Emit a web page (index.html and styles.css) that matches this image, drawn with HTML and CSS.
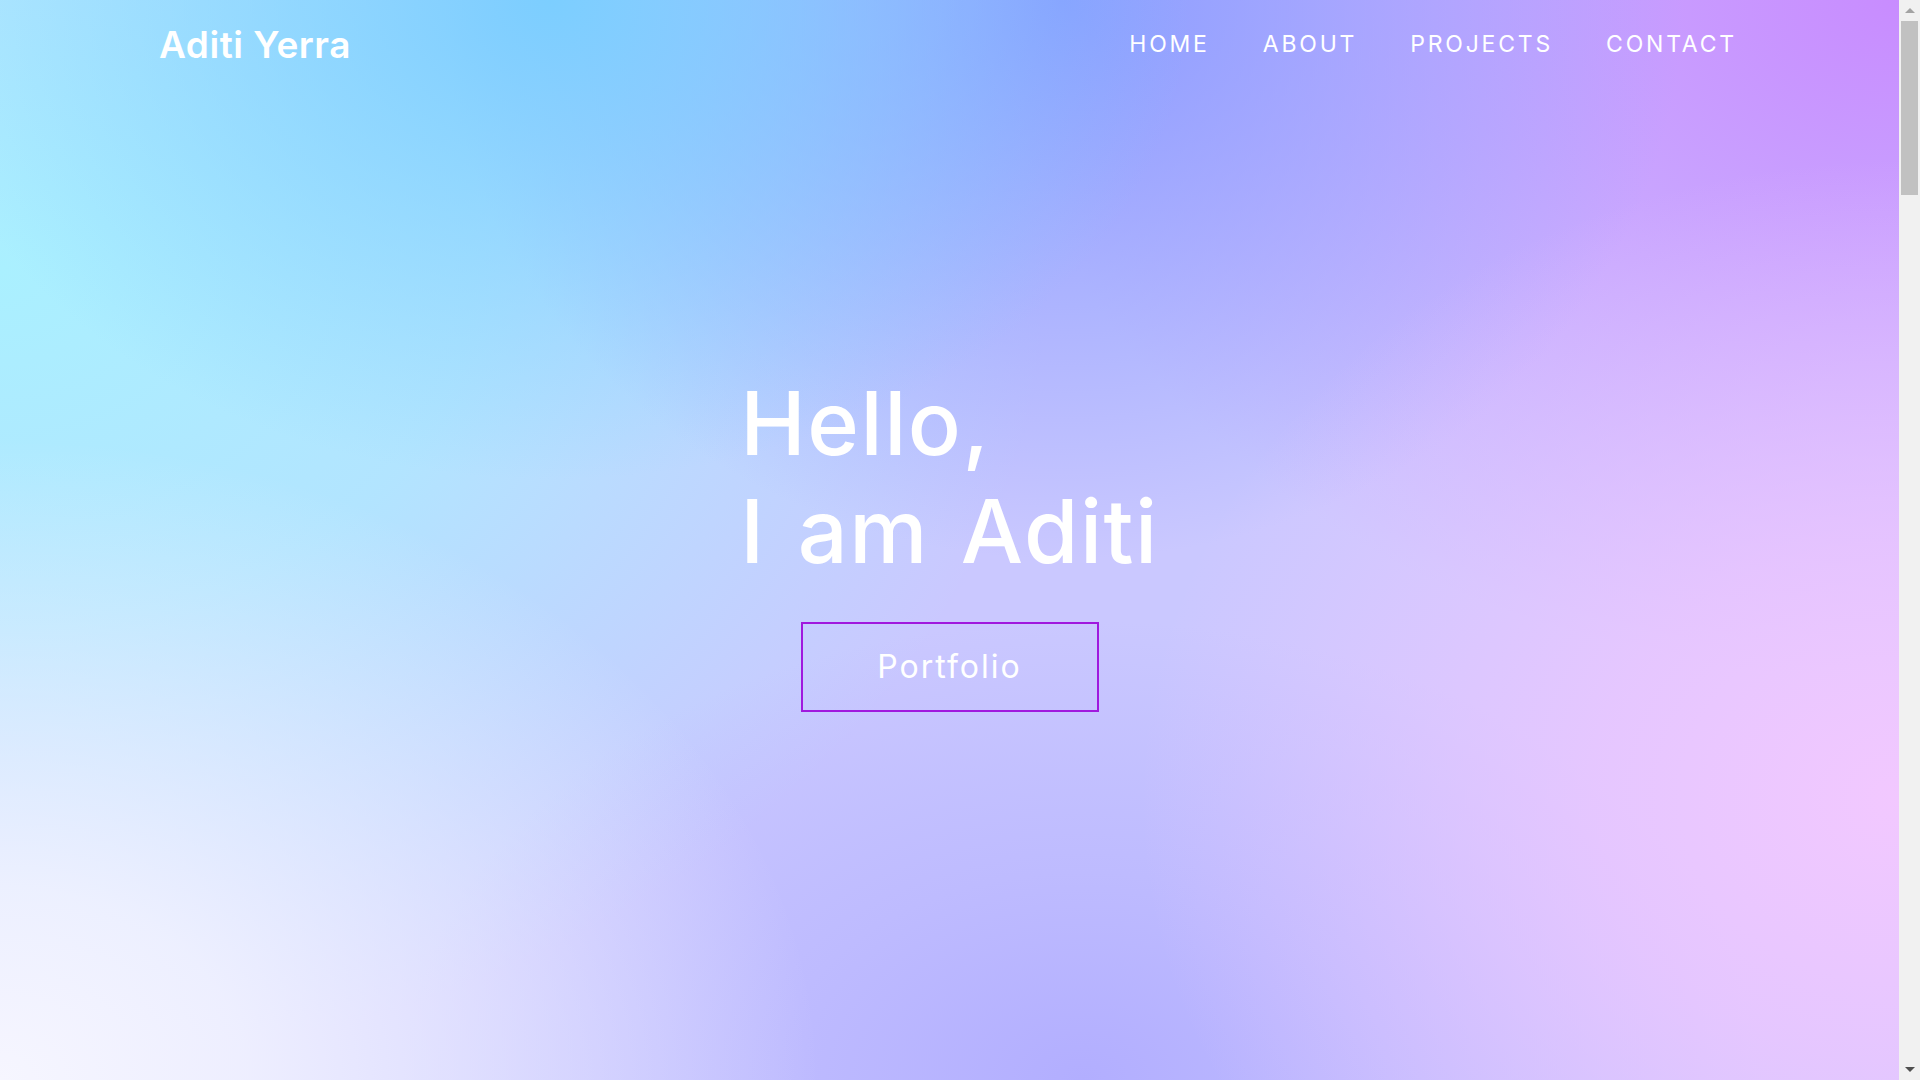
FILE: index.html
```html
<!DOCTYPE html>
<html lang="en">
<head>
<meta charset="utf-8">
<title>Aditi Yerra</title>
<link rel="stylesheet" href="styles.css">
</head>
<body>
<div class="page">
  <section class="hero" id="home">
    <header class="site-header">
      <a class="logo" href="#home">Aditi Yerra</a>
      <nav class="nav">
        <a href="#home">HOME</a>
        <a href="#about">ABOUT</a>
        <a href="#projects">PROJECTS</a>
        <a href="#contact">CONTACT</a>
      </nav>
    </header>
    <div class="hero-body">
      <div class="hero-content">
        <h1 class="hero-title">Hello,<br>I am Aditi</h1>
        <a class="btn-portfolio" href="#projects">Portfolio</a>
      </div>
    </div>
  </section>
  <section class="section" id="about"></section>
  <section class="section" id="projects"></section>
  <section class="section" id="contact"></section>
</div>
<div class="scrollbar" aria-hidden="true">
  <div class="sb-btn"><span class="sb-arrow-up"></span></div>
  <div class="sb-track"><div class="sb-thumb"></div></div>
  <div class="sb-btn"><span class="sb-arrow-down"></span></div>
</div>
</body>
</html>
```

FILE: styles.css
```css
* { box-sizing: border-box; }
html, body { margin: 0; padding: 0; height: 100%; }
body {
  display: flex;
  overflow: hidden;
  font-family: "Inter", "Liberation Sans", sans-serif;
  color: #fff;
  background: #f4f2ff;
}
a { color: inherit; text-decoration: none; }

.page {
  flex: 1;
  height: 100vh;
  overflow-y: auto;
  scrollbar-width: none;
}
.page::-webkit-scrollbar { display: none; }

/* classic scrollbar look */
.scrollbar {
  width: 21px;
  height: 100vh;
  display: flex;
  flex-direction: column;
  background: #f1f1f1;
}
.sb-btn {
  height: 21px;
  display: flex;
  align-items: center;
  justify-content: center;
}
.sb-arrow-up, .sb-arrow-down {
  width: 0;
  height: 0;
  border-left: 5px solid transparent;
  border-right: 5px solid transparent;
}
.sb-arrow-up { border-bottom: 5px solid #a3a3a3; }
.sb-arrow-down { border-top: 5px solid #505050; }
.sb-track {
  flex: 1;
  padding: 0 2px;
}
.sb-thumb {
  height: 174px;
  background: #c1c1c1;
}

.hero {
  height: 100vh;
  display: flex;
  flex-direction: column;
  background-color: #cac8ff;
  background-image:
    radial-gradient(ellipse 820px 640px at 0% 100%, rgba(246,246,255,1) 0%, rgba(244,245,255,0.85) 30%, rgba(240,244,255,0) 100%),
    radial-gradient(ellipse 760px 640px at 100% 74%, rgba(242,200,255,1) 0%, rgba(240,198,255,0.72) 40%, rgba(240,198,255,0) 100%),
    radial-gradient(ellipse 640px 480px at 29% 0%, rgba(124,206,255,1) 0%, rgba(124,206,255,0.6) 40%, rgba(124,206,255,0) 100%),
    radial-gradient(ellipse 620px 560px at 56% 0%, rgba(138,156,255,1) 0%, rgba(138,156,255,0.6) 40%, rgba(138,156,255,0) 100%),
    radial-gradient(ellipse 900px 680px at 100% 0%, rgba(200,140,255,1) 0%, rgba(200,140,255,0.6) 40%, rgba(200,140,255,0) 100%),
    radial-gradient(ellipse 680px 460px at 57% 100%, rgba(178,174,255,1) 0%, rgba(178,174,255,0.5) 45%, rgba(178,174,255,0) 100%),
    radial-gradient(ellipse 1050px 800px at 0% 25%, rgba(170,240,255,1) 0%, rgba(170,238,255,0.75) 45%, rgba(170,238,255,0) 100%);
}

.site-header {
  height: 88px;
  flex: none;
  display: flex;
  align-items: center;
  justify-content: space-between;
  padding: 0 162px 0 159px;
}
.logo {
  font-size: 37px;
  font-weight: 600;
  letter-spacing: 0.5px;
}
.nav {
  display: flex;
  gap: 53px;
}
.nav a {
  font-size: 23px;
  font-weight: 400;
  letter-spacing: 2.8px;
}

.hero-body {
  flex: 1;
  display: flex;
  align-items: center;
  justify-content: center;
  padding-bottom: 88px;
}
.hero-content {
  display: flex;
  flex-direction: column;
  align-items: center;
}
.hero-title {
  margin: 0;
  font-size: 88px;
  font-weight: 500;
  line-height: 108px;
  letter-spacing: 1.5px;
  word-spacing: 7px;
  text-align: left;
}
.btn-portfolio {
  margin-top: 37px;
  height: 90px;
  width: 298px;
  display: flex;
  align-items: center;
  justify-content: center;
  border: 2px solid #a019de;
  font-size: 32px;
  font-weight: 400;
  letter-spacing: 2px;
}

.section {
  min-height: 1800px;
}
```
